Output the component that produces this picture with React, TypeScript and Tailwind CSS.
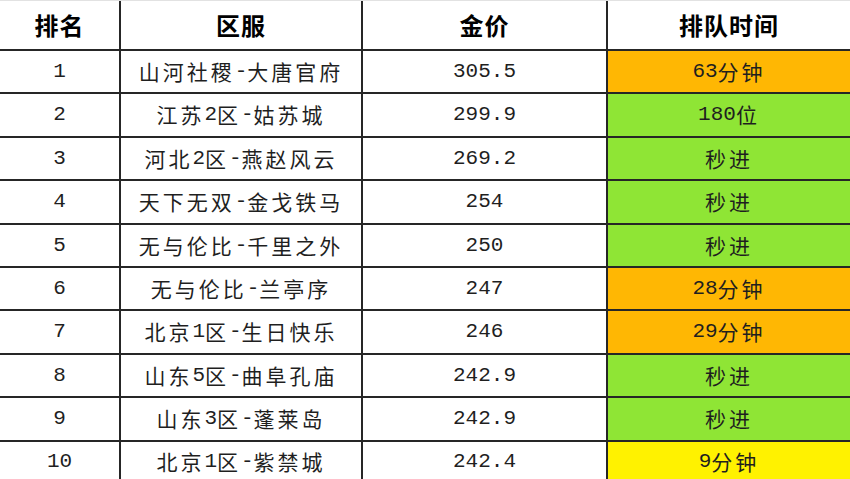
const rows = [
  { rank: '1', server: '山河社稷-大唐官府', price: '305.5', queue: '63分钟', tone: 'orange' },
  { rank: '2', server: '江苏2区-姑苏城', price: '299.9', queue: '180位', tone: 'green' },
  { rank: '3', server: '河北2区-燕赵风云', price: '269.2', queue: '秒进', tone: 'green' },
  { rank: '4', server: '天下无双-金戈铁马', price: '254', queue: '秒进', tone: 'green' },
  { rank: '5', server: '无与伦比-千里之外', price: '250', queue: '秒进', tone: 'green' },
  { rank: '6', server: '无与伦比-兰亭序', price: '247', queue: '28分钟', tone: 'orange' },
  { rank: '7', server: '北京1区-生日快乐', price: '246', queue: '29分钟', tone: 'orange' },
  { rank: '8', server: '山东5区-曲阜孔庙', price: '242.9', queue: '秒进', tone: 'green' },
  { rank: '9', server: '山东3区-蓬莱岛', price: '242.9', queue: '秒进', tone: 'green' },
  { rank: '10', server: '北京1区-紫禁城', price: '242.4', queue: '9分钟', tone: 'yellow' },
];

const toneBg: Record<string, string> = {
  orange: 'bg-[#ffb703]',
  green: 'bg-[#8fe535]',
  yellow: 'bg-[#fff200]',
};

// split CJK runs so they get the wide spacing of the original sheet
function Mixed({ text }: { text: string }) {
  const parts = text.match(/[\u4e00-\u9fff]+|[^\u4e00-\u9fff]+/g) || [];
  return (
    <>
      {parts.map((p, i) =>
        /[\u4e00-\u9fff]/.test(p) ? (
          <span key={i} className="tracking-[3px] font-['Noto_Sans_CJK_SC',sans-serif]">
            {p}
          </span>
        ) : (
          <span key={i} className="font-['Liberation_Mono',monospace]">
            {p}
          </span>
        ),
      )}
    </>
  );
}

const cols = 'grid grid-cols-[121px_242px_245px_1fr]';
const cell = 'flex items-center justify-center border-r-2 border-[#262626]';

export default function App() {
  return (
    <div className="w-[850px] h-[479px] overflow-hidden bg-white text-[#1f1f1f]">
      <div className={`${cols} h-[51px] border-t border-t-[#e2e2e2] border-b-2 border-b-[#262626]`}>
        {['排名', '区服', '金价', '排队时间'].map((h, i) => (
          <div
            key={h}
            className={`flex items-center justify-center text-[24px] font-bold tracking-[1px] text-black font-['Noto_Sans_CJK_SC',sans-serif] ${
              i < 3 ? 'border-r-2 border-[#262626]' : ''
            }`}
          >
            {h}
          </div>
        ))}
      </div>
      {rows.map((r) => (
        <div key={r.rank} className={`${cols} h-[43.4px] border-b-2 border-[#262626] text-[21px]`}>
          <div className={`${cell} font-['Liberation_Mono',monospace]`}>{r.rank}</div>
          <div className={cell}>
            <Mixed text={r.server} />
          </div>
          <div className={`${cell} font-['Liberation_Mono',monospace]`}>{r.price}</div>
          <div className={`flex items-center justify-center ${toneBg[r.tone]}`}>
            <Mixed text={r.queue} />
          </div>
        </div>
      ))}
    </div>
  );
}
